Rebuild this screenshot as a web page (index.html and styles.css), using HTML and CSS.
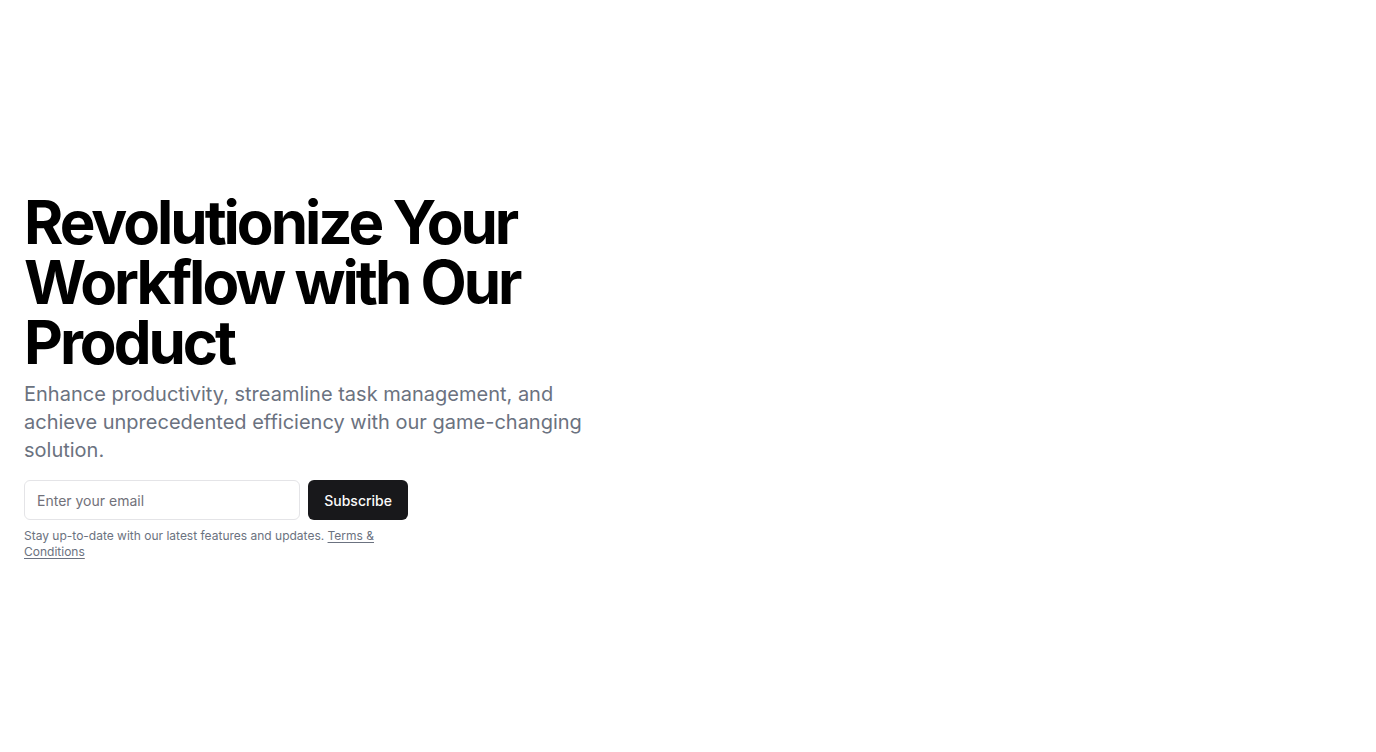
FILE: index.html
```html
<!DOCTYPE html>
<html lang="en">
<head>
<meta charset="utf-8">
<title>Revolutionize Your Workflow</title>
<link rel="stylesheet" href="styles.css">
</head>
<body>
<section class="hero">
  <div class="container">
    <div class="grid">
      <div class="content">
        <div class="intro">
          <h1 class="title">Revolutionize Your Workflow with Our Product</h1>
          <p class="lead">Enhance productivity, streamline task management, and achieve unprecedented efficiency with our game-changing solution.</p>
        </div>
        <div class="signup">
          <form class="form">
            <input class="input" type="email" placeholder="Enter your email">
            <button class="button" type="submit">Subscribe</button>
          </form>
          <p class="note">Stay up-to-date with our latest features and updates. <a class="link" href="#">Terms &amp; Conditions</a></p>
        </div>
      </div>
      <div class="aside"></div>
    </div>
  </div>
</section>
</body>
</html>
```
FILE: styles.css
```css
* { box-sizing: border-box; }
html, body { margin: 0; padding: 0; }
body {
  font-family: Inter, "Noto Sans", "Liberation Sans", sans-serif;
  background: #ffffff;
  color: #09090b;
}
.hero {
  width: 100%;
  min-height: 752px;
  display: flex;
  align-items: center;
}
.container {
  width: 100%;
  padding: 0 24px;
}
.grid {
  display: grid;
  grid-template-columns: 1fr 1fr;
  gap: 24px;
}
.content {
  display: flex;
  flex-direction: column;
  justify-content: center;
  gap: 16px;
}
.intro {
  display: flex;
  flex-direction: column;
  gap: 8px;
}
.title {
  margin: 0;
  font-size: 60px;
  line-height: 60px;
  font-weight: 700;
  letter-spacing: -0.05em;
  color: #000000;
}
.lead {
  margin: 0;
  max-width: 600px;
  font-size: 20px;
  line-height: 28px;
  color: #6b7280;
}
.signup {
  display: flex;
  flex-direction: column;
  gap: 8px;
  max-width: 384px;
}
.form {
  display: flex;
  gap: 8px;
  margin: 0;
}
.input {
  flex: 1;
  min-width: 0;
  height: 40px;
  padding: 8px 12px;
  border: 1px solid #e4e4e7;
  border-radius: 6px;
  background: #ffffff;
  font-family: inherit;
  font-size: 14px;
  color: #09090b;
  outline: none;
}
.input::placeholder { color: #71717a; }
.button {
  height: 40px;
  padding: 8px 16px;
  border: none;
  border-radius: 6px;
  background: #18181b;
  color: #fafafa;
  font-family: inherit;
  font-size: 14px;
  font-weight: 500;
  cursor: pointer;
}
.note {
  margin: 0;
  font-size: 12px;
  line-height: 16px;
  color: #6b7280;
}
.link {
  color: inherit;
  text-decoration: underline;
  text-underline-offset: 2px;
}
```
